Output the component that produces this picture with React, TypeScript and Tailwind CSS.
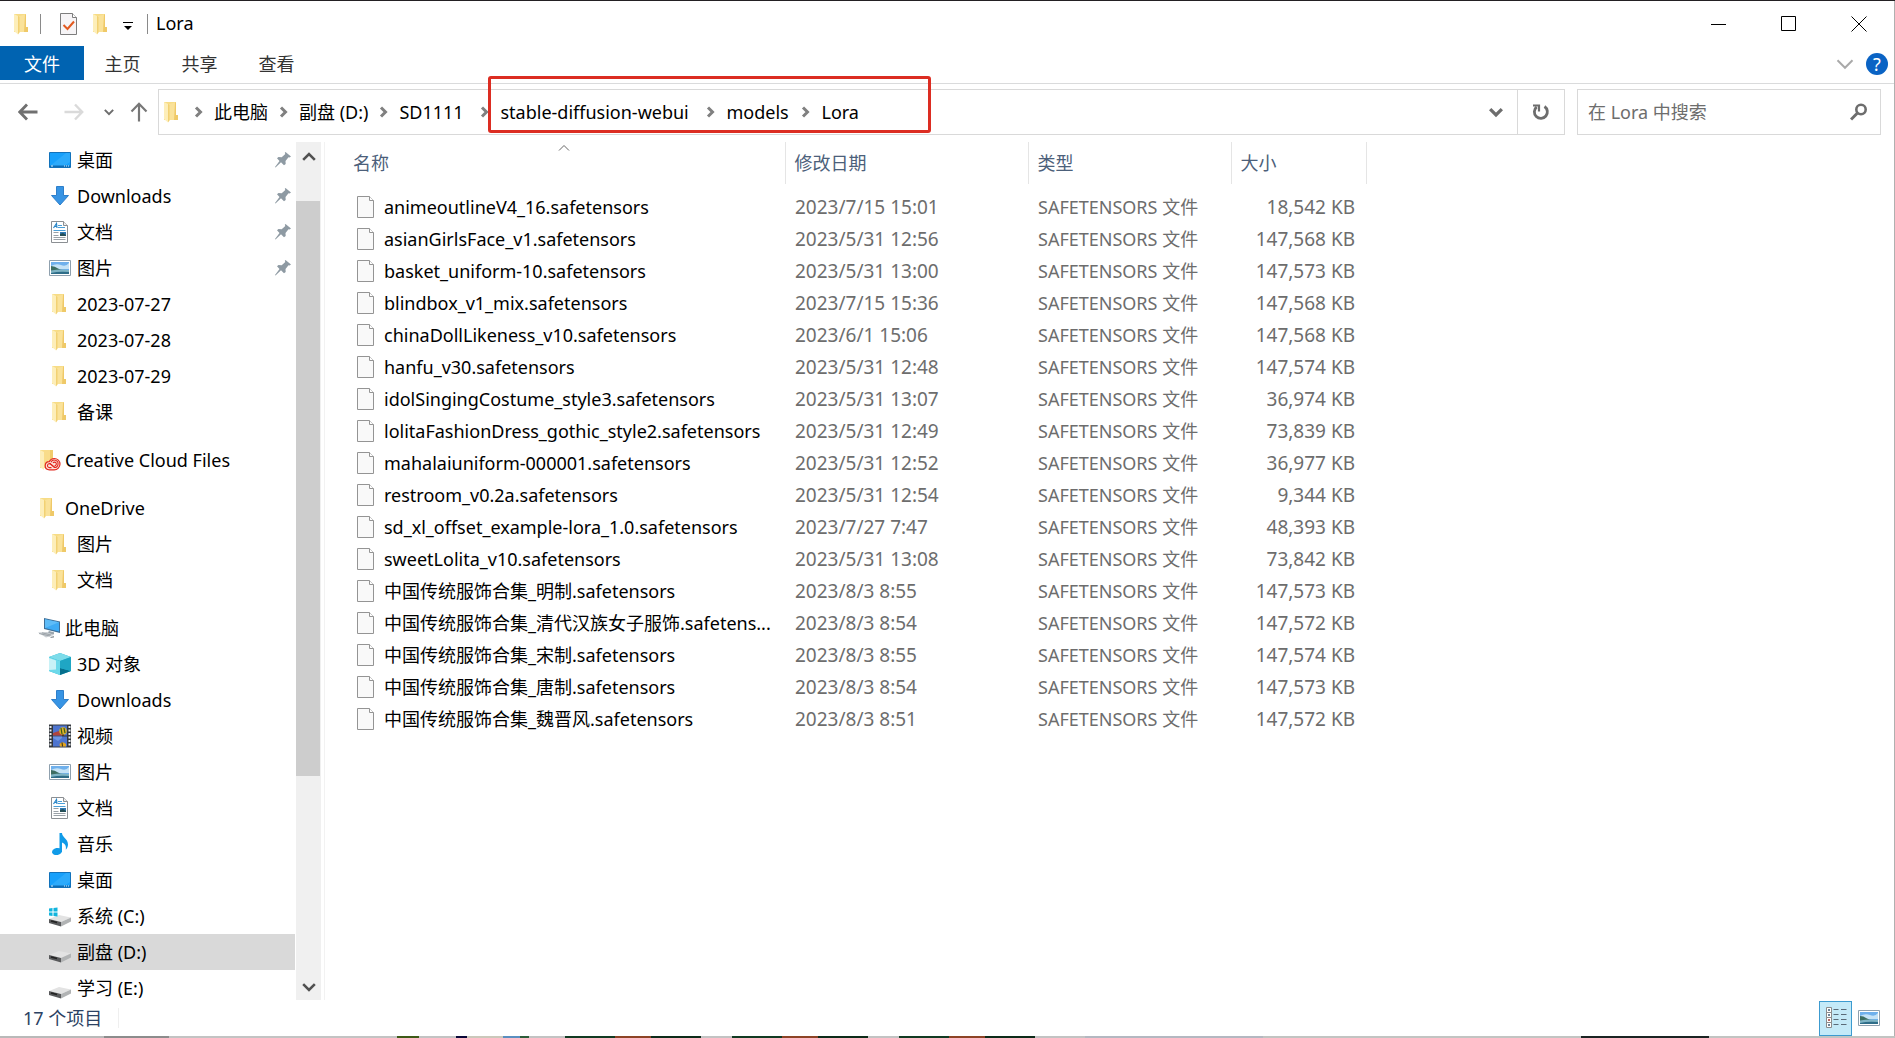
import type { ReactNode } from "react";

function Folder() {
  return (
    <svg width="22" height="22" viewBox="0 0 22 22" className="shrink-0" aria-hidden="true">
      <path d="M3 1h12v13h1.500v5H8L3 16z" fill="#f3ce6c" />
      <path d="M3 1h12v18H3z" fill="#f7dc86" />
      <path d="M8 3l6-1.500V19H8z" fill="#fae29a" />
      <path d="M14 1.500h1V14h2v5h-4z" fill="#efc968" />
      <path d="M3 1l4 2v18.500L3 18z" fill="#fdeeb9" />
      <path d="M7 3v18.500l1.500-2V4z" fill="#f2d173" />
    </svg>
  );
}

function CreativeCloud() {
  return (
    <svg width="24" height="22" viewBox="0 0 24 22" className="-mr-0.5 shrink-0" aria-hidden="true">
      <path d="M3 1h13v18H3z" fill="#f9dc8a" />
      <path d="M3 1l4 2v18L3 18z" fill="#fdeeb9" />
      <path d="M13 1h3v10h-3z" fill="#f0cb6c" />
      <path d="M12.500 20.800c-2.600 0-4.300-1.700-4.300-4s1.800-4 4-4.100c1-2 2.800-3.200 5-3.200 3.200 0 5.800 2.500 5.800 5.600s-2.600 5.700-5.800 5.700z" fill="#fbe3dc" stroke="#e2281f" strokeWidth="1.200" />
      <g fill="none" stroke="#e2281f" strokeWidth="1.100">
        <path d="M14.500 18.600h-2a2 2 0 1 1 1.300-3.500l4 3.300" />
        <path d="M14 13.200a3.700 3.700 0 1 1 3.400 5.300l-4.500-4" />
        <path d="M16 14a1.800 1.800 0 1 1 1.600 2.700" />
      </g>
    </svg>
  );
}

function Desktop() {
  return (
    <svg width="22" height="22" viewBox="0 0 22 22" className="shrink-0" aria-hidden="true">
      <path d="M.5 3.500h21v15H.5z" fill="#17a0fb" stroke="#1272bb" />
      <path d="M1 17L17 4h4v9l-6 4z" fill="#3bb0fc" opacity=".6" />
      <path d="M1 16.500h20V18H1z" fill="#0d6cb5" />
      <path d="M2 17h2M15 17h1M17 17h1M19 17h1" stroke="#d6efff" />
    </svg>
  );
}

function Download() {
  return (
    <svg width="22" height="22" viewBox="0 0 22 22" className="shrink-0" aria-hidden="true">
      <path d="M7.500 1.500h7v9h5L11 20 2.500 10.500h5z" fill="#3794e4" stroke="#2e7fca" />
    </svg>
  );
}

function Doc() {
  return (
    <svg width="22" height="22" viewBox="0 0 22 22" className="shrink-0" aria-hidden="true">
      <path d="M2.500.5h12l4 4v17h-16z" fill="#fff" stroke="#8b8f93" />
      <path d="M14.500.5v4h4" fill="#eee" stroke="#8b8f93" />
      <path d="M4.500 7l3-4.500.5 4.500M6 5.500h2" fill="none" stroke="#2a86c8" strokeWidth="1.200" />
      <path d="M9 4.500h4M9 6.500h7M4.500 9.500h12" stroke="#4a9fd8" />
      <path d="M4.500 11.500h5M4.500 14.500h5M4.500 16.500h12M4.500 18.500h12" stroke="#9aa1a7" />
      <path d="M11 11h6v4h-6z" fill="#2f78b4" />
      <path d="M11 13l3-1 3 2v1h-6z" fill="#254f57" />
    </svg>
  );
}

function Picture() {
  return (
    <svg width="22" height="22" viewBox="0 0 22 22" className="shrink-0" aria-hidden="true">
      <path d="M.5 3.500h21v15H.5z" fill="#fff" stroke="#8fa0ae" />
      <path d="M2 5h18v12H2z" fill="#6fb0ec" />
      <path d="M2 9q5-3 10-1t8-2v6H2z" fill="#c4e2f6" />
      <path d="M2 9q4 0 7 2.500t11 1.500V14H2z" fill="#3c6d62" />
      <path d="M2 13.500q9-1.500 18-.5v4H2z" fill="#7fb4c4" />
      <path d="M2 16q8-2 18-1v2H2z" fill="#2f6d88" />
    </svg>
  );
}

function Computer() {
  return (
    <svg width="24" height="22" viewBox="0 0 24 22" className="-mr-0.5 shrink-0" aria-hidden="true">
      <path d="M7 1l16 3.500V16L7 12z" fill="#3e6f98" />
      <path d="M8 2.200l14 3V14.500L8 11z" fill="#3eabf5" />
      <path d="M8 2.200l14 3L8 11z" fill="#6cc3fa" opacity=".7" />
      <path d="M12 14l5 1.200v2L10 19l-1-1z" fill="#9aa4ac" />
      <path d="M1 15.500l9-.5 7 3-8 2.500z" fill="#c9ced2" />
      <path d="M2 16.500l11 2.500M5 15.800l9 2.200" stroke="#8f979d" strokeWidth=".8" />
      <path d="M13 20l4-1v1.500l-3 .5z" fill="#8f979d" />
    </svg>
  );
}

function Cube() {
  return (
    <svg width="22" height="22" viewBox="0 0 22 22" className="shrink-0" aria-hidden="true">
      <path d="M11 0l11 4v14l-11 4L0 18V4z" fill="#27b3cf" />
      <path d="M11 0l11 4-11 4L0 4z" fill="#7ddcea" />
      <path d="M0 4l11 4v14L0 18z" fill="#6cd9ea" />
      <path d="M0 5l7 2.500v9L0 17z" fill="#c9f2f7" />
      <path d="M11 15l11 3-11 4z" fill="#066f8d" />
      <path d="M11 8l11-4v14l-11-3z" fill="#1fa6c4" />
    </svg>
  );
}

function Video() {
  return (
    <svg width="22" height="24" viewBox="0 0 22 24" className="shrink-0" aria-hidden="true">
      <path d="M0 .5h22v23H0z" fill="#33373d" />
      <path d="M4 1.500h14v10H4zM4 12.500h14v10H4z" fill="#4d74cf" />
      <path d="M1.500 2v21M20.500 2v21" stroke="#e9edf0" strokeWidth="2" strokeDasharray="2 1.500" />
      <path d="M4 9l6-2 3 2v2.500H4z" fill="#b1453d" />
      <circle cx="14" cy="7" r="3.800" fill="#d8b026" />
      <path d="M12 4l1 6M15 4l1 5" stroke="#3a5a20" strokeWidth="1.200" />
      <path d="M13 10.500h2v1.500h-2z" fill="#5d3a12" />
      <path d="M10.500 20q3-3.500 6.500 0v2.500h-6z" fill="#e3a51e" />
      <path d="M13 18.500l.5 4" stroke="#332a12" />
      <path d="M4 14l5 3 4-3v-1.500H4z" fill="#6d95e2" />
    </svg>
  );
}

function Music() {
  return (
    <svg width="22" height="24" viewBox="0 0 22 24" className="shrink-0" aria-hidden="true">
      <ellipse cx="8" cy="19.500" rx="5" ry="3.500" fill="#109be8" transform="rotate(-12 8 19.500)" />
      <path d="M10.500 1H13c0 4.500 6 5.500 6 11.500 0 2-1 4-2.200 5.200.8-4-1-6.200-3.800-7.200V20h-2.500z" fill="#109be8" />
    </svg>
  );
}

function Drive({ system = false }: { system?: boolean }) {
  return (
    <svg width="22" height="22" viewBox="0 0 22 22" className="shrink-0" aria-hidden="true">
      <path d="M0 14l10-4 12 2.500-10 4.500z" fill="#e3e3e3" />
      <path d="M0 14l12 3v4.500L0 18z" fill="#58595b" />
      <path d="M12 17l10-4.500v4l-10 5z" fill="#b1b3b4" />
      <path d="M2 16l6 1.500" stroke="#222" strokeWidth="1.500" />
      {system && (
        <path d="M0 3.500l3.500-.5v3.500H0zM4.500 3L8.500 2.500v4h-4zM0 7.500h3.500V11L0 10.500zM4.500 7.500h4v4l-4-.5z" fill="#12b4dd" />
      )}
    </svg>
  );
}

function FileIcon() {
  return (
    <svg width="18" height="24" viewBox="0 0 18 24" className="shrink-0" aria-hidden="true">
      <path d="M.5 1.500h12l4 4v17H.5z" fill="#f9f9f9" stroke="#949494" />
      <path d="M12.500 1.500v4h4" fill="#fff" stroke="#949494" />
    </svg>
  );
}

function Pin() {
  return (
    <svg width="16" height="16" viewBox="0 0 16 16" className="ml-auto shrink-0" aria-hidden="true">
      <path d="M10.500 0L16 4.500l-1.500 1-1-.2-3 3.700.2 3-1.700 1.300-3-3L.5 15.500 0 15l4.500-6L2 6.200 3.500 5l3.200.3L10.300 2 9.800.8z" fill="#8e9aa3" />
    </svg>
  );
}

function Chevron({ dir, size, color, width }: { dir: "right" | "down" | "up"; size: number; color: string; width: number }) {
  const d = { right: "M3 1.500l4.500 4.500L3 10.500", down: "M1 3.500l5 5 5-5", up: "M1 8.500l5-5 5 5" }[dir];
  return (
    <svg width={size} height={size} viewBox="0 0 12 12" className="shrink-0" fill="none" stroke={color} strokeWidth={width} aria-hidden="true">
      <path d={d} />
    </svg>
  );
}

type NavEntry = { label: string; icon: ReactNode; pinned?: boolean; root?: boolean; current?: boolean };

const navGroups: NavEntry[][] = [
  [
    { label: "桌面", icon: <Desktop />, pinned: true },
    { label: "Downloads", icon: <Download />, pinned: true },
    { label: "文档", icon: <Doc />, pinned: true },
    { label: "图片", icon: <Picture />, pinned: true },
    { label: "2023-07-27", icon: <Folder /> },
    { label: "2023-07-28", icon: <Folder /> },
    { label: "2023-07-29", icon: <Folder /> },
    { label: "备课", icon: <Folder /> },
  ],
  [{ label: "Creative Cloud Files", icon: <CreativeCloud />, root: true }],
  [
    { label: "OneDrive", icon: <Folder />, root: true },
    { label: "图片", icon: <Folder /> },
    { label: "文档", icon: <Folder /> },
  ],
  [
    { label: "此电脑", icon: <Computer />, root: true },
    { label: "3D 对象", icon: <Cube /> },
    { label: "Downloads", icon: <Download /> },
    { label: "视频", icon: <Video /> },
    { label: "图片", icon: <Picture /> },
    { label: "文档", icon: <Doc /> },
    { label: "音乐", icon: <Music /> },
    { label: "桌面", icon: <Desktop /> },
    { label: "系统 (C:)", icon: <Drive system /> },
    { label: "副盘 (D:)", icon: <Drive />, current: true },
    { label: "学习 (E:)", icon: <Drive /> },
  ],
];

const files: [string, string, string][] = [
  ["animeoutlineV4_16.safetensors", "2023/7/15 15:01", "18,542 KB"],
  ["asianGirlsFace_v1.safetensors", "2023/5/31 12:56", "147,568 KB"],
  ["basket_uniform-10.safetensors", "2023/5/31 13:00", "147,573 KB"],
  ["blindbox_v1_mix.safetensors", "2023/7/15 15:36", "147,568 KB"],
  ["chinaDollLikeness_v10.safetensors", "2023/6/1 15:06", "147,568 KB"],
  ["hanfu_v30.safetensors", "2023/5/31 12:48", "147,574 KB"],
  ["idolSingingCostume_style3.safetensors", "2023/5/31 13:07", "36,974 KB"],
  ["lolitaFashionDress_gothic_style2.safetensors", "2023/5/31 12:49", "73,839 KB"],
  ["mahalaiuniform-000001.safetensors", "2023/5/31 12:52", "36,977 KB"],
  ["restroom_v0.2a.safetensors", "2023/5/31 12:54", "9,344 KB"],
  ["sd_xl_offset_example-lora_1.0.safetensors", "2023/7/27 7:47", "48,393 KB"],
  ["sweetLolita_v10.safetensors", "2023/5/31 13:08", "73,842 KB"],
  ["中国传统服饰合集_明制.safetensors", "2023/8/3 8:55", "147,573 KB"],
  ["中国传统服饰合集_清代汉族女子服饰.safetens...", "2023/8/3 8:54", "147,572 KB"],
  ["中国传统服饰合集_宋制.safetensors", "2023/8/3 8:55", "147,574 KB"],
  ["中国传统服饰合集_唐制.safetensors", "2023/8/3 8:54", "147,573 KB"],
  ["中国传统服饰合集_魏晋风.safetensors", "2023/8/3 8:51", "147,572 KB"],
];

const crumbs: [string, string][] = [
  ["此电脑", ""],
  ["副盘 (D:)", ""],
  ["SD1111", "min-w-[70px]"],
  ["stable-diffusion-webui", "min-w-[195px]"],
  ["models", "min-w-16"],
  ["Lora", ""],
];

/* Slivers of the window behind, as [width, colour] pairs. */
const backdrop: [number, string][] = [
  [104, "#b9b9b9"], [65, "#8c8c8c"], [228, "#c3c3c3"], [22, "#3d5a17"], [37, "#c3c3c3"], [11, "#0a0838"],
  [36, "#cbc8bb"], [17, "#5a8fc0"], [9, "#2c5d3a"], [36, "#c3c3c3"], [50, "#113a22"], [36, "#8d4426"],
  [50, "#0d2b19"], [31, "#c3c3c3"], [50, "#113a22"], [36, "#8d4426"], [50, "#0d2b19"], [31, "#c3c3c3"],
  [50, "#113a22"], [36, "#8d4426"], [50, "#0d2b19"], [50, "#c3c3c3"], [178, "#b4b8c1"], [318, "#c2c4c2"],
  [128, "#1b2423"], [186, "#c2c4c2"],
];

function NavRow({ entry }: { entry: NavEntry }) {
  return (
    <li>
      <a
        href="#folder"
        aria-current={entry.current ? "page" : undefined}
        className={`flex h-9 items-center gap-1.5 pr-1 ${entry.root ? "pl-[37px]" : "pl-[49px]"} ${entry.current ? "bg-[#d9d9d9]" : ""}`}
      >
        {entry.icon}
        <span className="whitespace-nowrap">{entry.label}</span>
        {entry.pinned && <Pin />}
      </a>
    </li>
  );
}

export default function App() {
  return (
    <div className="flex h-screen flex-col overflow-hidden bg-white font-['Noto_Sans','Noto_Sans_CJK_SC',sans-serif] text-[18px] leading-6 text-black">
      <div className="h-px shrink-0 bg-[#232023]" />
      <div className="flex min-h-0 flex-1 flex-col border-r border-[#b0b0b0]">
        <header className="shrink-0">
          <div className="flex h-[45px] items-center">
            <div className="flex items-center pb-2 pl-[11px] pt-2">
              <Folder />
              <span className="ml-[7px] h-5 w-px bg-[#8a8a8a]" />
              <button type="button" aria-label="属性" className="ml-[19px]">
                <svg width="18" height="22" viewBox="0 0 18 22" aria-hidden="true">
                  <path d="M.5.500h12l4 4v17H.5z" fill="#f6f4f6" stroke="#7d7d7d" />
                  <path d="M12.500.5v4h4" fill="#fff" stroke="#7d7d7d" />
                  <path d="M3.500 12l4 4L14 8.500" fill="none" stroke="#e2591f" strokeWidth="2" />
                </svg>
              </button>
              <button type="button" aria-label="新建文件夹" className="ml-3">
                <Folder />
              </button>
              <button type="button" aria-label="自定义快速访问工具栏" className="ml-[11px] pt-1">
                <svg width="10" height="10" viewBox="0 0 10 10" aria-hidden="true">
                  <path d="M0 1.500h10" stroke="#000" />
                  <path d="M1 5h8L5 9z" />
                </svg>
              </button>
              <span className="ml-3.5 h-5 w-px bg-[#8a8a8a]" />
            </div>
            <h1 className="ml-2 pb-0.5">Lora</h1>
            <div className="ml-auto flex self-stretch">
              <button type="button" aria-label="最小化" className="flex w-[70px] items-center justify-center">
                <svg width="16" height="16" viewBox="0 0 16 16" aria-hidden="true"><path d="M0 8.500h15" stroke="#000" /></svg>
              </button>
              <button type="button" aria-label="最大化" className="flex w-[70px] items-center justify-center">
                <svg width="16" height="16" viewBox="0 0 16 16" fill="none" stroke="#000" aria-hidden="true"><path d="M.5.500h14v14H.5z" /></svg>
              </button>
              <button type="button" aria-label="关闭" className="flex w-[70px] items-center justify-center">
                <svg width="16" height="16" viewBox="0 0 16 16" stroke="#000" aria-hidden="true"><path d="M.5.500l15 15M15.500.500l-15 15" /></svg>
              </button>
            </div>
          </div>

          <nav aria-label="功能区" className="flex h-[38px] items-start border-b border-[#dadbdc] text-[#333]">
            <button type="button" className="h-[34px] w-[84px] bg-[#0063b1] pt-px text-white">文件</button>
            <button type="button" className="h-[34px] w-[77px] pt-0.5">主页</button>
            <button type="button" className="h-[34px] w-[77px] pt-0.5">共享</button>
            <button type="button" className="h-[34px] w-[77px] pt-0.5">查看</button>
            <div className="ml-auto flex h-9 items-center gap-3 pr-1.5">
              <button type="button" aria-label="展开功能区">
                <Chevron dir="down" size={18} color="#a9a9a9" width={1.3} />
              </button>
              <button type="button" aria-label="帮助" className="flex size-[22px] items-center justify-center rounded-full bg-[#0a63c4] text-white">
                ?
              </button>
            </div>
          </nav>

          <div className="flex h-[57px] items-center pb-1.5 pl-[5px] pr-[13px] pt-[5px]">
            <button type="button" aria-label="后退" className="flex w-[46px] justify-center">
              <svg width="20" height="18" viewBox="0 0 20 18" fill="none" stroke="#707070" strokeWidth="2.800" aria-hidden="true"><path d="M19.500 9H2M9 1.500L1.800 9 9 16.500" /></svg>
            </button>
            <button type="button" aria-label="前进" className="flex w-[46px] justify-center">
              <svg width="20" height="18" viewBox="0 0 20 18" fill="none" stroke="#dadada" strokeWidth="2.400" aria-hidden="true"><path d="M.5 9H18M11 1.500L18.200 9 11 16.500" /></svg>
            </button>
            <button type="button" aria-label="最近浏览的位置" className="flex w-[23px] justify-center">
              <Chevron dir="down" size={10} color="#6d6d6d" width={2.4} />
            </button>
            <button type="button" aria-label="上移" className="flex w-[38px] justify-center">
              <svg width="18" height="20" viewBox="0 0 18 20" fill="none" stroke="#777" strokeWidth="2.200" aria-hidden="true"><path d="M9 19.500V2M1.500 9.500L9 1.800l7.500 7.700" /></svg>
            </button>
            <div className="relative flex h-[46px] min-w-0 flex-1 items-center border border-[#d9d9d9] pl-0.5">
              <Folder />
              <nav aria-label="路径" className="flex items-center">
                {crumbs.map(([crumb, width]) => (
                  <span key={crumb} className="flex items-center">
                    <span className="flex w-[31px] justify-center">
                      <Chevron dir="right" size={12} color="#808080" width={3} />
                    </span>
                    <a href="#path" className={`whitespace-nowrap ${width}`}>{crumb}</a>
                  </span>
                ))}
              </nav>
              <button type="button" aria-label="以前的位置" className="ml-auto flex w-[43px] justify-center">
                <Chevron dir="down" size={14} color="#6d6d6d" width={2.8} />
              </button>
              <button type="button" aria-label="刷新" className="flex h-full w-[47px] items-center justify-center border-l border-[#d9d9d9]">
                <svg width="18" height="18" viewBox="0 0 18 18" fill="none" stroke="#6d6d6d" strokeWidth="2.800" aria-hidden="true">
                  <path d="M12.500 3.500a6.500 6.500 0 1 1-7.800.4" />
                  <path d="M1 2.500h6v6" strokeWidth="2.200" />
                </svg>
              </button>
              <div className="pointer-events-none absolute -top-3.5 left-[329px] h-[57px] w-[443px] rounded-[3px] border-[3px] border-[#dc2d22]" />
            </div>
            <label className="ml-3 flex h-[46px] w-[304px] items-center border border-[#d9d9d9] pl-2.5 pr-3">
              <input
                type="search"
                aria-label="在 Lora 中搜索"
                placeholder="在 Lora 中搜索"
                className="min-w-0 flex-1 bg-transparent outline-none placeholder:text-[#6d6d6d]"
              />
              <svg width="18" height="18" viewBox="0 0 18 18" fill="none" stroke="#6d6d6d" aria-hidden="true">
                <circle cx="11" cy="6.500" r="4.700" strokeWidth="2.600" />
                <path d="M7.500 10L1 16.500" strokeWidth="3" />
              </svg>
            </label>
          </div>
        </header>

        <div className="flex min-h-0 flex-1 pt-px">
          <aside className="flex w-[325px] shrink-0 border-r border-[#f2f2f2]">
            <nav aria-label="导航窗格" className="flex w-[295px] flex-col gap-3 overflow-hidden">
              {navGroups.map((group, i) => (
                <ul key={i}>
                  {group.map((entry) => (
                    <NavRow key={entry.label} entry={entry} />
                  ))}
                </ul>
              ))}
            </nav>
            <div className="ml-px flex w-[25px] flex-col items-center bg-[#f0f0f0]">
              <button type="button" aria-label="向上滚动" className="flex h-[59px] w-full justify-center pt-2">
                <Chevron dir="up" size={14} color="#505050" width={2.2} />
              </button>
              <div className="mr-px h-[67%] w-6 bg-[#cdcdcd]" />
              <button type="button" aria-label="向下滚动" className="mt-auto flex w-full justify-center pb-1.5">
                <Chevron dir="down" size={14} color="#505050" width={2.2} />
              </button>
            </div>
          </aside>

          <main className="min-w-0 flex-1 overflow-hidden">
            <table className="w-[1041px] table-fixed border-collapse">
              <colgroup>
                <col className="w-[460px]" />
                <col className="w-[243px]" />
                <col className="w-[203px]" />
                <col className="w-[135px]" />
              </colgroup>
              <thead className="text-left text-[#4c607a]">
                <tr className="h-[42px]">
                  <th scope="col" className="relative border-r border-[#e5e5e5] pl-7 font-normal">
                    名称
                    <span className="absolute left-[233px] top-0">
                      <Chevron dir="up" size={12} color="#666" width={1} />
                    </span>
                  </th>
                  <th scope="col" className="border-r border-[#e5e5e5] pl-[9px] font-normal">修改日期</th>
                  <th scope="col" className="border-r border-[#e5e5e5] pl-[9px] font-normal">类型</th>
                  <th scope="col" className="border-r border-[#e5e5e5] pl-[9px] font-normal">大小</th>
                </tr>
              </thead>
              <tbody className="text-[#6d6d6d] before:block before:h-[7px]">
                {files.map(([name, date, size]) => (
                  <tr key={name} className="h-8 text-[19px]">
                    <td className="pl-8 text-[18px] text-black">
                      <span className="flex items-center gap-[9px] whitespace-nowrap">
                        <FileIcon />
                        {name}
                      </span>
                    </td>
                    <td className="pl-2.5">{date}</td>
                    <td className="whitespace-nowrap pl-2.5 text-[18px]">SAFETENSORS 文件</td>
                    <td className="pr-[11px] text-right">{size}</td>
                  </tr>
                ))}
              </tbody>
            </table>
          </main>
        </div>

        <footer className="flex h-9 shrink-0 items-center pl-[23px] pr-3.5 text-[#2b4263]">
          <span>17 个项目</span>
          <span className="ml-4 h-5 w-px bg-[#efefef]" />
          <div className="ml-auto flex items-center gap-1.5">
            <button type="button" aria-label="详细信息" className="flex h-[35px] w-[33px] items-center justify-center border border-[#3c9bd0] bg-[#c4eaf8]">
              <svg width="22" height="22" viewBox="0 0 22 22" fill="none" aria-hidden="true">
                <path d="M1.500.500h5v5h-5zM1.500 5.500h5v5h-5zM1.500 10.500h5v5h-5zM1.500 15.500h5v5h-5z" fill="#fff" stroke="#8b8b8b" />
                <path d="M3 3h2M3 8h2M3 18h2" stroke="#3e5d78" strokeWidth="1.500" />
                <path d="M3 13h2" stroke="#a03a30" strokeWidth="1.500" />
                <path d="M8.500 2.500h5M16 2.500h5.500M8.500 7.500h5M16 7.500h5.500M8.500 12.500h5M16 12.500h5.500M8.500 17.500h5M16 17.500h5.500" stroke="#5a6b78" />
              </svg>
            </button>
            <button type="button" aria-label="大图标">
              <Picture />
            </button>
          </div>
        </footer>
      </div>
      <div className="flex h-0.5 shrink-0">
        {backdrop.map(([width, color], i) => (
          <span key={i} style={{ flexGrow: width, backgroundColor: color }} />
        ))}
      </div>
    </div>
  );
}
